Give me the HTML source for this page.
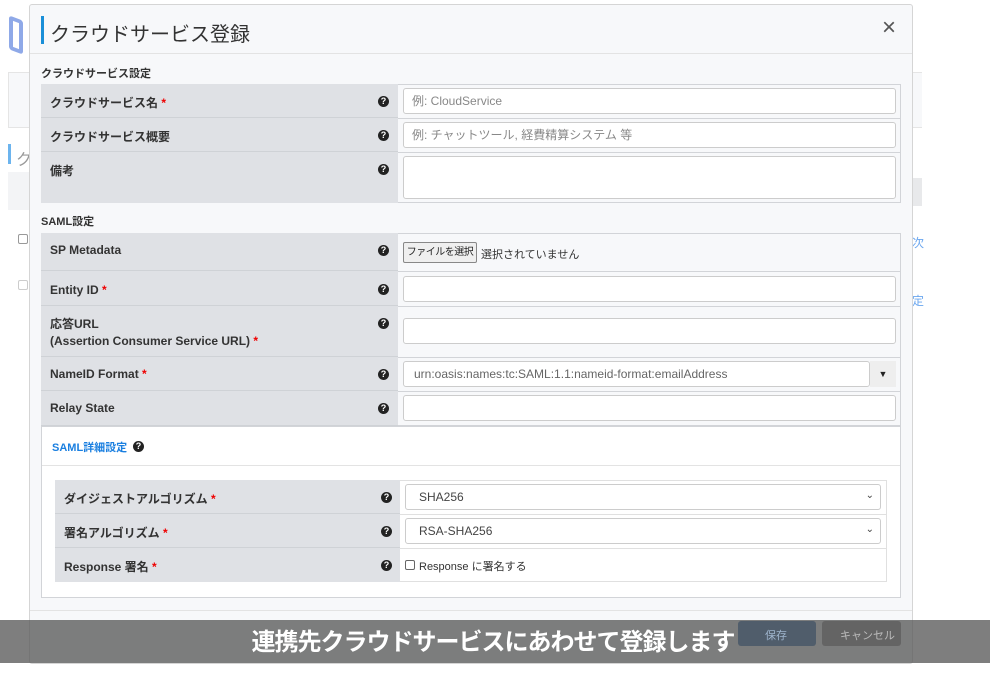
<!DOCTYPE html>
<html><head><meta charset="utf-8"><style>
*{box-sizing:border-box;margin:0;padding:0}
body{width:990px;height:674px;position:relative;overflow:hidden;background:#fff;font-family:"Liberation Sans","Noto Sans CJK JP",sans-serif;color:#333;font-size:12px}
.a{position:absolute;white-space:nowrap}
.lbl{background:#dfe1e5;border-bottom:1px solid #cfd2d6}
.inp{background:#fff;border:1px solid #ccc;border-radius:3px;color:#888;font-size:12px;padding:5px 8px;line-height:14px}
.q{position:absolute;width:11px;height:11px;border-radius:50%;background:#222;color:#fff;font-size:9px;font-weight:bold;text-align:center;line-height:11px}
.t{position:absolute;font-weight:bold;font-size:12px;color:#333;white-space:nowrap}
.r{color:#e00}
</style></head><body>
<div class="a" style="left:9px;top:18px;width:14px;height:34px;border:4px solid #8fa9e8;border-radius:3px;transform:skewY(20deg)"></div>
<div class="a" style="left:8px;top:72px;width:22px;height:56px;background:#f7f8fa;border:1px solid #e5e5e5"></div>
<div class="a" style="left:8px;top:144px;width:3px;height:20px;background:#6cb4ee"></div>
<div class="a" style="left:16px;top:146px;color:#999;font-size:16px">ク</div>
<div class="a" style="left:8px;top:172px;width:22px;height:38px;background:#f3f4f6"></div>
<div class="a" style="left:18px;top:234px;width:10px;height:10px;border:1px solid #999;border-radius:2px"></div>
<div class="a" style="left:18px;top:280px;width:10px;height:10px;border:1px solid #ccc;border-radius:2px"></div>
<div class="a" style="left:910px;top:72px;width:12px;height:56px;background:#f7f8fa;border-top:1px solid #e5e5e5;border-bottom:1px solid #e5e5e5"></div>
<div class="a" style="left:910px;top:178px;width:12px;height:28px;background:#e8e9eb"></div>
<div class="a" style="left:912px;top:234px;color:#6aa6ef;font-size:12px">次</div>
<div class="a" style="left:912px;top:292px;color:#6aa6ef;font-size:12px">定</div>
<div class="a" style="left:29px;top:4px;width:884px;height:660px;background:#f7f8fa;border:1px solid #d5d5d5;border-radius:3px"></div>
<div class="a" style="left:41px;top:16px;width:3px;height:28px;background:#1a8fd8"></div>
<div class="a" style="left:50px;top:18px;font-size:20px;color:#333">クラウドサービス登録</div>
<div class="a" style="left:882px;top:14px;font-size:24px;color:#555">×</div>
<div class="a" style="left:30px;top:53px;width:882px;height:1px;background:#e3e3e3"></div>
<div class="t" style="left:41px;top:65px;font-size:11px">クラウドサービス設定</div>
<div class="a" style="left:41px;top:84px;width:860px;height:119px;border:1px solid #d2d4d8;background:#f7f8fa"></div>
<div class="a lbl" style="left:41px;top:84px;width:357px;height:34px"></div>
<div class="a lbl" style="left:41px;top:118px;width:357px;height:34px"></div>
<div class="a lbl" style="left:41px;top:152px;width:357px;height:51px;border-bottom:none"></div>
<div class="a" style="left:398px;top:118px;width:503px;height:1px;background:#d2d4d8"></div>
<div class="a" style="left:398px;top:152px;width:503px;height:1px;background:#d2d4d8"></div>
<div class="t" style="left:50px;top:94px">クラウドサービス名 <span class="r">*</span></div><div class="q" style="left:378px;top:96px">?</div>
<div class="t" style="left:50px;top:128px">クラウドサービス概要</div><div class="q" style="left:378px;top:130px">?</div>
<div class="t" style="left:50px;top:162px">備考</div><div class="q" style="left:378px;top:164px">?</div>
<div class="a inp" style="left:403px;top:88px;width:493px;height:26px">例: CloudService</div>
<div class="a inp" style="left:403px;top:122px;width:493px;height:26px">例: チャットツール, 経費精算システム 等</div>
<div class="a inp" style="left:403px;top:156px;width:493px;height:43px"></div>
<div class="t" style="left:41px;top:213px;font-size:11px">SAML設定</div>
<div class="a" style="left:41px;top:233px;width:860px;height:193px;border:1px solid #d2d4d8;background:#f7f8fa"></div>
<div class="a lbl" style="left:41px;top:233px;width:357px;height:38px"></div>
<div class="a lbl" style="left:41px;top:271px;width:357px;height:35px"></div>
<div class="a lbl" style="left:41px;top:306px;width:357px;height:51px"></div>
<div class="a lbl" style="left:41px;top:357px;width:357px;height:34px"></div>
<div class="a lbl" style="left:41px;top:391px;width:357px;height:35px"></div>
<div class="a" style="left:398px;top:271px;width:503px;height:1px;background:#d2d4d8"></div>
<div class="a" style="left:398px;top:306px;width:503px;height:1px;background:#d2d4d8"></div>
<div class="a" style="left:398px;top:357px;width:503px;height:1px;background:#d2d4d8"></div>
<div class="a" style="left:398px;top:391px;width:503px;height:1px;background:#d2d4d8"></div>
<div class="t" style="left:50px;top:243px">SP Metadata</div><div class="q" style="left:378px;top:245px">?</div>
<div class="t" style="left:50px;top:283px">Entity ID <span class="r">*</span></div><div class="q" style="left:378px;top:284px">?</div>
<div class="t" style="left:50px;top:316px;line-height:17px">応答URL<br>(Assertion Consumer Service URL) <span class="r">*</span></div><div class="q" style="left:378px;top:318px">?</div>
<div class="t" style="left:50px;top:367px">NameID Format <span class="r">*</span></div><div class="q" style="left:378px;top:369px">?</div>
<div class="t" style="left:50px;top:401px">Relay State</div><div class="q" style="left:378px;top:403px">?</div>
<div class="a" style="left:403px;top:242px;width:74px;height:21px;border:1px solid #888;border-radius:2px;background:#efefef;font-size:10px;padding:3px 0;text-align:center;color:#222;line-height:13px;letter-spacing:-0.5px">ファイルを選択</div>
<div class="a" style="left:481px;top:246px;font-size:11px;color:#333">選択されていません</div>
<div class="a inp" style="left:403px;top:276px;width:493px;height:26px"></div>
<div class="a inp" style="left:403px;top:318px;width:493px;height:26px"></div>
<div class="a inp" style="left:403px;top:361px;width:467px;height:26px;color:#666;padding-left:10px">urn:oasis:names:tc:SAML:1.1:nameid-format:emailAddress</div>
<div class="a" style="left:870px;top:361px;width:26px;height:26px;background:#eee;font-size:9px;text-align:center;line-height:26px;color:#222">▼</div>
<div class="a inp" style="left:403px;top:395px;width:493px;height:26px"></div>
<div class="a" style="left:41px;top:426px;width:860px;height:172px;background:#fff;border:1px solid #d2d4d8"></div>
<div class="a" style="left:52px;top:439px;color:#1a7fe0;font-weight:bold;font-size:11px">SAML詳細設定</div><div class="q" style="left:133px;top:441px">?</div>
<div class="a" style="left:42px;top:465px;width:858px;height:1px;background:#e3e3e3"></div>
<div class="a" style="left:55px;top:480px;width:832px;height:102px;border:1px solid #e0e0e0"></div>
<div class="a lbl" style="left:55px;top:480px;width:345px;height:34px"></div>
<div class="a lbl" style="left:55px;top:514px;width:345px;height:34px"></div>
<div class="a lbl" style="left:55px;top:548px;width:345px;height:34px;border-bottom:none"></div>
<div class="a" style="left:400px;top:514px;width:487px;height:1px;background:#e0e0e0"></div>
<div class="a" style="left:400px;top:548px;width:487px;height:1px;background:#e0e0e0"></div>
<div class="t" style="left:64px;top:490px">ダイジェストアルゴリズム <span class="r">*</span></div><div class="q" style="left:381px;top:492px">?</div>
<div class="t" style="left:64px;top:524px">署名アルゴリズム <span class="r">*</span></div><div class="q" style="left:381px;top:526px">?</div>
<div class="t" style="left:64px;top:558px">Response 署名 <span class="r">*</span></div><div class="q" style="left:381px;top:560px">?</div>
<div class="a inp" style="left:405px;top:484px;width:476px;height:26px;color:#444;padding-left:13px">SHA256<span style="position:absolute;right:6px;top:4px;font-size:10px">⌄</span></div>
<div class="a inp" style="left:405px;top:518px;width:476px;height:26px;color:#444;padding-left:13px">RSA-SHA256<span style="position:absolute;right:6px;top:4px;font-size:10px">⌄</span></div>
<div class="a" style="left:405px;top:560px;width:10px;height:10px;border:1px solid #666;border-radius:2px"></div>
<div class="a" style="left:419px;top:558px;font-size:11px;color:#333">Response に署名する</div>
<div class="a" style="left:30px;top:610px;width:882px;height:1px;background:#e3e3e3"></div>
<div class="a" style="left:738px;top:621px;width:78px;height:25px;background:#2f6aa8;border-radius:3px"></div>
<div class="a" style="left:822px;top:621px;width:79px;height:25px;background:#8a8a8a;border-radius:3px"></div>
<div class="a" style="left:0;top:620px;width:990px;height:43px;background:rgba(90,90,90,0.78)"></div>
<div class="a" style="left:765px;top:627px;color:#9eb4cc;font-size:11px">保存</div>
<div class="a" style="left:840px;top:627px;color:#bbb;font-size:11px">キャンセル</div>
<div class="a" style="left:0;top:627px;width:986px;text-align:center;color:#fff;font-size:24px;line-height:32px;font-weight:bold;letter-spacing:-1px">連携先クラウドサービスにあわせて登録します</div>
</body></html>
